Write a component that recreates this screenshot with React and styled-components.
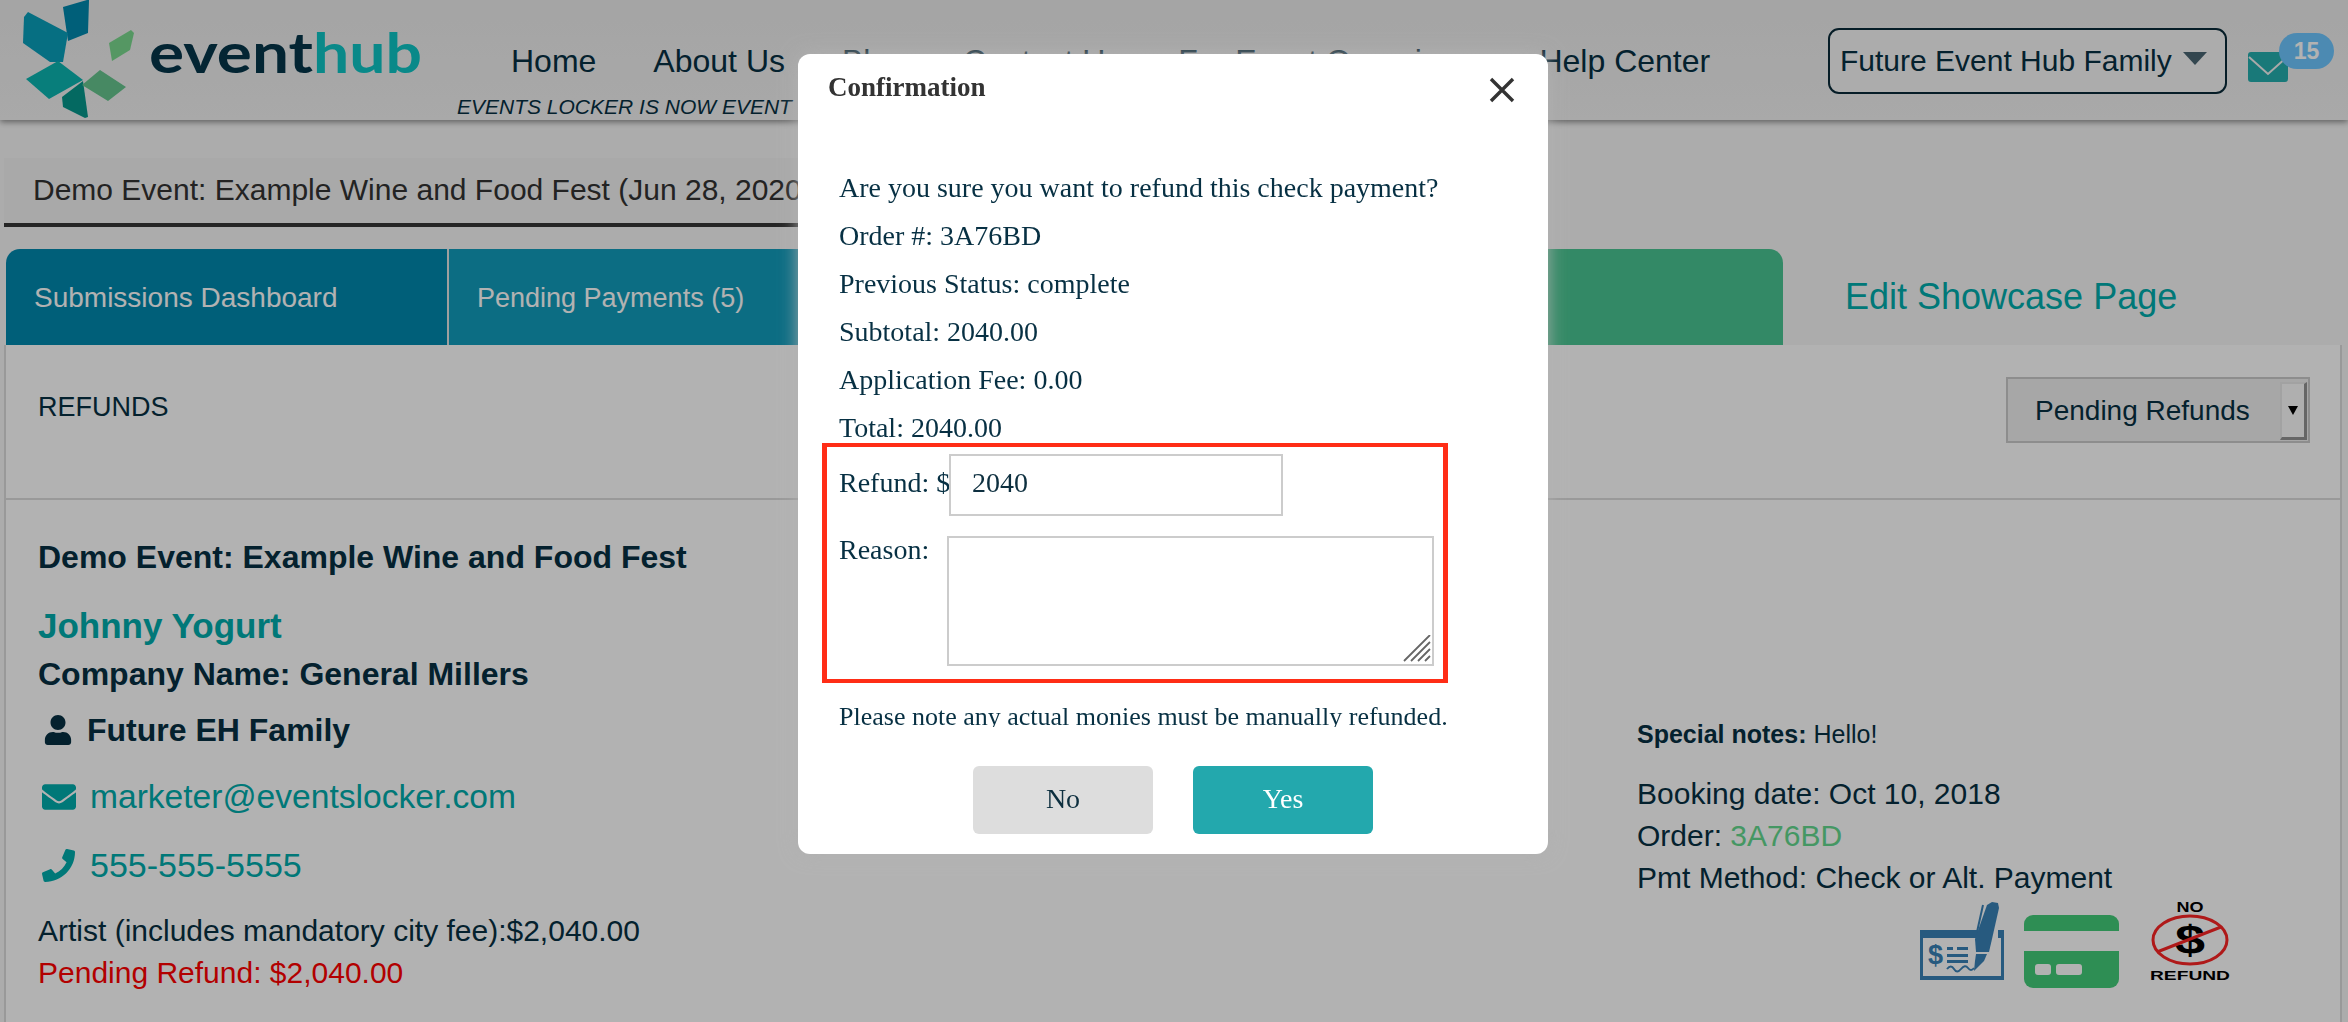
import React from 'react'
import styled, { createGlobalStyle } from 'styled-components'
import { FaEnvelope, FaPhone, FaUser } from 'react-icons/fa'

const GlobalStyle = createGlobalStyle`
    html, body {
        margin: 0;
        height: 100%;
        overflow: hidden;
    }
    body {
        background: #f7f7f7;
        color: #073043;
        font-family: "Liberation Sans", Arial, sans-serif;
    }
    * {
        box-sizing: border-box;
    }
`

const Page = styled.div`
    display: flex;
    flex-direction: column;
    height: 100vh;
    overflow: hidden;
`

const Header = styled.header`
    display: flex;
    flex: none;
    height: 120px;
    background: linear-gradient(#ececec, #f2f2f2);
    box-shadow: 0 2px 6px rgba(0, 0, 0, 0.45);
`

const LogoMark = styled.svg`
    flex: none;
    width: 439px;
    height: 120px;
`

const NavColumn = styled.div`
    display: flex;
    flex-direction: column;
    padding-top: 42px;
`

const Nav = styled.nav`
    display: flex;
    gap: 57px;
    margin-left: 72px;
    font-size: 32px;
    line-height: 38px;
    white-space: nowrap;
`

const Tagline = styled.div`
    margin: 15px 0 0 18px;
    font-size: 21px;
    line-height: 24px;
    font-style: italic;
    white-space: nowrap;
`

const HeaderRight = styled.div`
    display: flex;
    margin-left: auto;
    padding: 28px 60px 0 0;
`

const AccountSelect = styled.div`
    display: flex;
    align-items: center;
    gap: 11px;
    width: 399px;
    height: 66px;
    padding-left: 10px;
    border: 2px solid #0a2a38;
    border-radius: 11px;
    background: #f7f7f7;
    font-size: 30px;
    white-space: nowrap;
`

const Caret = styled.span`
    width: 0;
    height: 0;
    margin-top: -6px;
    border-left: 12px solid transparent;
    border-right: 12px solid transparent;
    border-top: 13px solid #4a6572;
`

const Inbox = styled.div`
    position: relative;
    width: 40px;
    height: 30px;
    margin: 24px 0 0 21px;
`

const InboxBadge = styled.span`
    position: absolute;
    top: -19px;
    left: 31px;
    width: 55px;
    height: 36px;
    border-radius: 18px;
    background: #6ec6ff;
    color: #fff;
    font-size: 23px;
    font-weight: 700;
    line-height: 36px;
    text-align: center;
`

const EventBar = styled.div`
    align-self: flex-start;
    flex: none;
    height: 69px;
    margin: 38px 0 0 4px;
    padding: 0 40px 0 29px;
    border-bottom: 4px solid #363636;
    background: #f2f2f2;
    color: #333;
    font-size: 30px;
    line-height: 63px;
    white-space: nowrap;
`

const TabRow = styled.div`
    display: flex;
    flex: none;
    height: 96px;
    margin: 22px 0 0 6px;
`

const Tab = styled.div`
    display: flex;
    align-items: center;
    flex: none;
    width: ${(p) => p.$width}px;
    padding: 2px 0 0 ${(p) => p.$inset}px;
    border-right: ${(p) => (p.$divider ? '2px solid #e4e4e4' : 'none')};
    border-radius: ${(p) => p.$radius || '0'};
    background: ${(p) => p.$bg};
    color: #fff;
    font-size: ${(p) => p.$size}px;
    white-space: nowrap;
`

const ShowcaseLink = styled.a`
    align-self: center;
    margin-left: 62px;
    color: #00acac;
    font-size: 36px;
    white-space: nowrap;
`

const Panel = styled.section`
    flex: 1;
    min-height: 0;
    margin: 0 6px 0 4px;
    border-left: 2px solid #dcdcdc;
    border-right: 2px solid #dcdcdc;
    background: #fff;
`

const PanelHead = styled.div`
    display: flex;
    align-items: flex-start;
    justify-content: space-between;
    height: 155px;
    padding: 32px 30px 0 32px;
    border-bottom: 2px solid #dcdcdc;
`

const PanelTitle = styled.div`
    font-size: 27px;
    line-height: 60px;
`

const FilterSelect = styled.div`
    display: flex;
    align-items: center;
    justify-content: space-between;
    width: 304px;
    height: 66px;
    padding: 2px 1px 0 27px;
    border: 2px solid #cbcbcb;
    background: #f0f0f0;
    font-size: 28px;
    white-space: nowrap;
`

const FilterArrow = styled.span`
    display: flex;
    align-items: center;
    justify-content: center;
    width: 27px;
    height: 58px;
    border-top: 2px solid #e8e8e8;
    border-left: 2px solid #e8e8e8;
    border-right: 3px solid #929292;
    border-bottom: 3px solid #929292;
    background: #fbfbfb;

    &::after {
        content: '';
        border-left: 5px solid transparent;
        border-right: 5px solid transparent;
        border-top: 9px solid #000;
    }
`

const PanelBody = styled.div`
    display: grid;
    grid-template-columns: 1631px 1fr;
`

const Booking = styled.div`
    padding: 37px 0 0 32px;
`

const EventName = styled.div`
    font-size: 32px;
    font-weight: 700;
    line-height: 40px;
    white-space: nowrap;
`

const ClientName = styled.a`
    display: block;
    margin-top: 27px;
    color: #00acac;
    font-size: 35px;
    font-weight: 700;
    line-height: 44px;
`

const CompanyName = styled.div`
    margin-top: 6px;
    font-size: 32px;
    font-weight: 700;
    line-height: 40px;
`

const IconLine = styled.div`
    display: flex;
    align-items: center;
    gap: ${(p) => p.$gap}px;
    margin-top: ${(p) => p.$top}px;
    padding-left: ${(p) => p.$inset}px;
    color: ${(p) => (p.$link ? '#00acac' : 'inherit')};
    font-size: ${(p) => p.$size}px;
    font-weight: ${(p) => (p.$bold ? 700 : 400)};
    line-height: 42px;
`

const PriceLine = styled.div`
    margin-top: ${(p) => p.$top || 0}px;
    color: ${(p) => (p.$alert ? '#ff0000' : 'inherit')};
    font-size: 30px;
    line-height: 42px;
    white-space: nowrap;
`

const OrderInfo = styled.div`
    padding-top: 219px;
`

const SpecialNotes = styled.div`
    margin-bottom: 24px;
    font-size: 25px;
    line-height: 30px;

    b {
        font-weight: 700;
    }
`

const InfoLine = styled.div`
    font-size: 30px;
    line-height: 42px;
    white-space: nowrap;

    a {
        color: #63d98e;
    }
`

const BadgeRow = styled.div`
    display: flex;
    align-items: flex-start;
    margin: 3px 0 0 283px;
`

const CheckIcon = styled.svg`
    flex: none;
    width: 84px;
    height: 78px;
`

const CardIcon = styled.svg`
    flex: none;
    width: 95px;
    height: 73px;
    margin: 13px 31px 0 20px;
`

const NoRefundIcon = styled.svg`
    flex: none;
    width: 80px;
    height: 78px;
`

const Overlay = styled.div`
    position: fixed;
    inset: 0;
    display: flex;
    align-items: flex-start;
    justify-content: center;
    padding: 54px 2px 0 0;
    background: rgba(0, 0, 0, 0.3);
`

const Modal = styled.div`
    width: 750px;
    height: 800px;
    border-radius: 12px;
    background: #fff;
    box-shadow: 0 0 18px rgba(176, 176, 176, 0.9);
    font-family: "Liberation Serif", "Times New Roman", serif;
`

const ModalHead = styled.div`
    display: flex;
    justify-content: space-between;
    height: 90px;
    padding: 17px 32px 0 30px;
`

const ModalTitle = styled.div`
    color: #333;
    font-size: 27px;
    font-weight: 700;
    line-height: 32px;
`

const CloseIcon = styled.svg`
    width: 28px;
    height: 28px;
    margin-top: 5px;
`

const ModalBody = styled.div`
    height: 583px;
    padding: 28px 0 0 41px;
    overflow: hidden;
    font-size: 28px;
    line-height: 32px;
`

const Summary = styled.div`
    display: flex;
    flex-direction: column;
    gap: 16px;
`

const RefundBox = styled.div`
    width: 626px;
    margin: -1px 0 18px -17px;
    padding: 7px 0 13px 12px;
    border: 4px solid #ff2d16;
    border-left-width: 5px;
    border-right-width: 5px;
`

const FieldRow = styled.div`
    display: flex;
    align-items: flex-start;
`

const FieldLabel = styled.label`
    flex: none;
    width: ${(p) => p.$width}px;
    margin-top: ${(p) => p.$top}px;
    white-space: nowrap;
`

const AmountInput = styled.input`
    width: 334px;
    height: 62px;
    margin-bottom: 20px;
    padding: 0 0 5px 21px;
    border: 2px solid #ccc;
    border-radius: 0;
    outline: none;
    color: #0d2f3f;
    font: 28px "Liberation Serif", "Times New Roman", serif;
`

const ReasonWrap = styled.div`
    position: relative;
    width: 487px;
    height: 130px;
`

const ReasonInput = styled.textarea`
    display: block;
    width: 100%;
    height: 100%;
    border: 2px solid #ccc;
    border-radius: 0;
    outline: none;
    resize: none;
`

const ResizeGrip = styled.svg`
    position: absolute;
    right: 3px;
    bottom: 4px;
    width: 28px;
    height: 27px;
`

const ModalNote = styled.div`
    font-size: 26px;
    white-space: nowrap;
`

const ModalFooter = styled.div`
    display: flex;
    justify-content: center;
    gap: 40px;
    padding-top: 39px;
`

const DialogButton = styled.button`
    width: 180px;
    height: 68px;
    padding: 0 0 2px;
    border: 0;
    border-radius: 6px;
    background: ${(p) => (p.$primary ? '#23a8ad' : '#dddddd')};
    color: ${(p) => (p.$primary ? '#fff' : '#0d2f3f')};
    font: 28px "Liberation Serif", "Times New Roman", serif;
`

const navLinks = ['Home', 'About Us', 'Blog', 'Contact Us', 'For Event Organizers', 'Help Center']

const summaryLines = [
    'Are you sure you want to refund this check payment?',
    'Order #: 3A76BD',
    'Previous Status: complete',
    'Subtotal: 2040.00',
    'Application Fee: 0.00',
    'Total: 2040.00',
]

const App = () => {
    return (
        <>
            <GlobalStyle />
            <Page>
                <Header>
                    <LogoMark viewBox="0 0 439 120">
                        <polygon points="63,7 87,0 89,0 88,33 68,41" fill="#0088ae" />
                        <polygon points="28,12 68,33 63,62 50,62 23,43 24,17" fill="#0a9fbb" />
                        <polygon points="26,79 58,61 83,80 49,99" fill="#0cb5b1" />
                        <polygon points="62,97 83,81 88,117 85,118 63,107" fill="#07978c" />
                        <polygon points="82,85 100,70 126,87 108,101" fill="#66c58e" />
                        <polygon points="109,43 131,30 134,33 130,50 112,61" fill="#7ad98e" />
                        <text x="149" y="73" fontFamily="Lato, sans-serif" fontSize="56" fontWeight="700" textLength="164" lengthAdjust="spacingAndGlyphs" fill="#05354a">event</text>
                        <text x="313" y="73" fontFamily="Lato, sans-serif" fontSize="56" fontWeight="700" textLength="109" lengthAdjust="spacingAndGlyphs" fill="#0ec5c5">hub</text>
                    </LogoMark>
                    <NavColumn>
                        <Nav>
                            {navLinks.map((link) => (
                                <span key={link}>{link}</span>
                            ))}
                        </Nav>
                        <Tagline>EVENTS LOCKER IS NOW EVENT HUB</Tagline>
                    </NavColumn>
                    <HeaderRight>
                        <AccountSelect>
                            Future Event Hub Family
                            <Caret />
                        </AccountSelect>
                        <Inbox>
                            <svg width="40" height="30" viewBox="0 0 40 30">
                                <rect width="40" height="30" rx="3" fill="#25aeae" />
                                <path d="M1 5 L20 22 L39 5" fill="none" stroke="#f2f2f2" strokeWidth="2" />
                            </svg>
                            <InboxBadge>15</InboxBadge>
                        </Inbox>
                    </HeaderRight>
                </Header>

                <EventBar>Demo Event: Example Wine and Food Fest (Jun 28, 2020)</EventBar>

                <TabRow>
                    <Tab $width={443} $inset={28} $size={28} $bg="#0088ae" $divider $radius="14px 0 0 0">Submissions Dashboard</Tab>
                    <Tab $width={400} $inset={28} $size={27} $bg="#129cbc">Pending Payments (5)</Tab>
                    <Tab $width={934} $inset={40} $size={27} $bg="#4ac592" $radius="0 14px 0 0">Refunds</Tab>
                    <ShowcaseLink>Edit Showcase Page</ShowcaseLink>
                </TabRow>

                <Panel>
                    <PanelHead>
                        <PanelTitle>REFUNDS</PanelTitle>
                        <FilterSelect>
                            Pending Refunds
                            <FilterArrow />
                        </FilterSelect>
                    </PanelHead>
                    <PanelBody>
                        <Booking>
                            <EventName>Demo Event: Example Wine and Food Fest</EventName>
                            <ClientName>Johnny Yogurt</ClientName>
                            <CompanyName>Company Name: General Millers</CompanyName>
                            <IconLine $top={15} $inset={5} $gap={14} $size={32} $bold>
                                <FaUser size={30} />
                                Future EH Family
                            </IconLine>
                            <IconLine $top={25} $inset={4} $gap={14} $size={33.6} $link>
                                <FaEnvelope size={34} />
                                marketer@eventslocker.com
                            </IconLine>
                            <IconLine $top={26} $inset={4} $gap={15} $size={34} $link>
                                <FaPhone size={33} />
                                555-555-5555
                            </IconLine>
                            <PriceLine $top={24}>Artist (includes mandatory city fee):$2,040.00</PriceLine>
                            <PriceLine $alert>Pending Refund: $2,040.00</PriceLine>
                        </Booking>
                        <OrderInfo>
                            <SpecialNotes><b>Special notes:</b> Hello!</SpecialNotes>
                            <InfoLine>Booking date: Oct 10, 2018</InfoLine>
                            <InfoLine>Order: <a>3A76BD</a></InfoLine>
                            <InfoLine>Pmt Method: Check or Alt. Payment</InfoLine>
                            <BadgeRow>
                                <CheckIcon viewBox="0 0 84 78">
                                    <g fill="#3881b7">
                                        <rect x="0" y="28" width="58" height="8" />
                                        <rect x="78" y="28" width="6" height="8" />
                                        <rect x="0" y="28" width="3" height="50" />
                                        <rect x="81" y="28" width="3" height="50" />
                                        <rect x="0" y="74" width="84" height="4" />
                                        <rect x="27" y="45" width="6" height="3" />
                                        <rect x="37" y="45" width="11" height="3" />
                                        <rect x="27" y="52" width="21" height="3" />
                                        <rect x="27" y="58" width="21" height="3" />
                                        <polygon points="67,3 72,0 78,1 79,6 72,37 69,50 56,50 55,37" />
                                        <polygon points="56,52 67,52 64,59 54,69 55,59" />
                                    </g>
                                    <path d="M63 3 L57 30" stroke="#3881b7" strokeWidth="2" fill="none" />
                                    <path d="M27 67 q4 -5 7 0 t7 0 t7 -1 t6 0" stroke="#3881b7" strokeWidth="2" fill="none" />
                                    <text x="8" y="62" fill="#3881b7" fontSize="27" fontWeight="700" fontFamily="Liberation Sans, sans-serif">$</text>
                                </CheckIcon>
                                <CardIcon viewBox="0 0 95 73">
                                    <path d="M0 16 V9 a9 9 0 0 1 9 -9 H86 a9 9 0 0 1 9 9 V16 Z" fill="#43cc79" />
                                    <path d="M0 36 H95 V64 a9 9 0 0 1 -9 9 H9 a9 9 0 0 1 -9 -9 Z" fill="#43cc79" />
                                    <rect x="11" y="49" width="16" height="11" rx="3" fill="#fff" />
                                    <rect x="32" y="49" width="26" height="11" rx="3" fill="#fff" />
                                </CardIcon>
                                <NoRefundIcon viewBox="0 0 80 78">
                                    <text x="40" y="10" textAnchor="middle" fontSize="14" fontWeight="700" fontFamily="Liberation Sans, sans-serif" textLength="27" lengthAdjust="spacingAndGlyphs">NO</text>
                                    <text x="0" y="0" textAnchor="middle" fontSize="40" fontWeight="700" fontFamily="Liberation Sans, sans-serif" transform="translate(40 52) scale(1.35 1)">$</text>
                                    <ellipse cx="40" cy="38" rx="37" ry="24" fill="none" stroke="#fb2525" strokeWidth="3" />
                                    <path d="M7 50 L71 25" stroke="#fb2525" strokeWidth="3" />
                                    <text x="0" y="78" fontSize="13" fontWeight="700" fontFamily="Liberation Sans, sans-serif" textLength="80" lengthAdjust="spacingAndGlyphs">REFUND</text>
                                </NoRefundIcon>
                            </BadgeRow>
                        </OrderInfo>
                    </PanelBody>
                </Panel>
            </Page>

            <Overlay>
                <Modal>
                    <ModalHead>
                        <ModalTitle>Confirmation</ModalTitle>
                        <CloseIcon viewBox="0 0 28 28">
                            <path d="M3 3 L25 25 M25 3 L3 25" stroke="#333" strokeWidth="3.4" fill="none" />
                        </CloseIcon>
                    </ModalHead>
                    <ModalBody>
                        <Summary>
                            {summaryLines.map((line) => (
                                <div key={line}>{line}</div>
                            ))}
                        </Summary>
                        <RefundBox>
                            <FieldRow>
                                <FieldLabel $width={110} $top={13}>Refund: $</FieldLabel>
                                <AmountInput defaultValue="2040" />
                            </FieldRow>
                            <FieldRow>
                                <FieldLabel $width={108} $top={-2}>Reason:</FieldLabel>
                                <ReasonWrap>
                                    <ReasonInput />
                                    <ResizeGrip viewBox="0 0 28 27">
                                        <path d="M1 26 L27 0 M8 26 L27 7 M15 26 L27 14 M22 26 L27 21" stroke="#666" strokeWidth="1.8" fill="none" />
                                    </ResizeGrip>
                                </ReasonWrap>
                            </FieldRow>
                        </RefundBox>
                        <ModalNote>Please note any actual monies must be manually refunded.</ModalNote>
                    </ModalBody>
                    <ModalFooter>
                        <DialogButton>No</DialogButton>
                        <DialogButton $primary>Yes</DialogButton>
                    </ModalFooter>
                </Modal>
            </Overlay>
        </>
    )
}

export default App
